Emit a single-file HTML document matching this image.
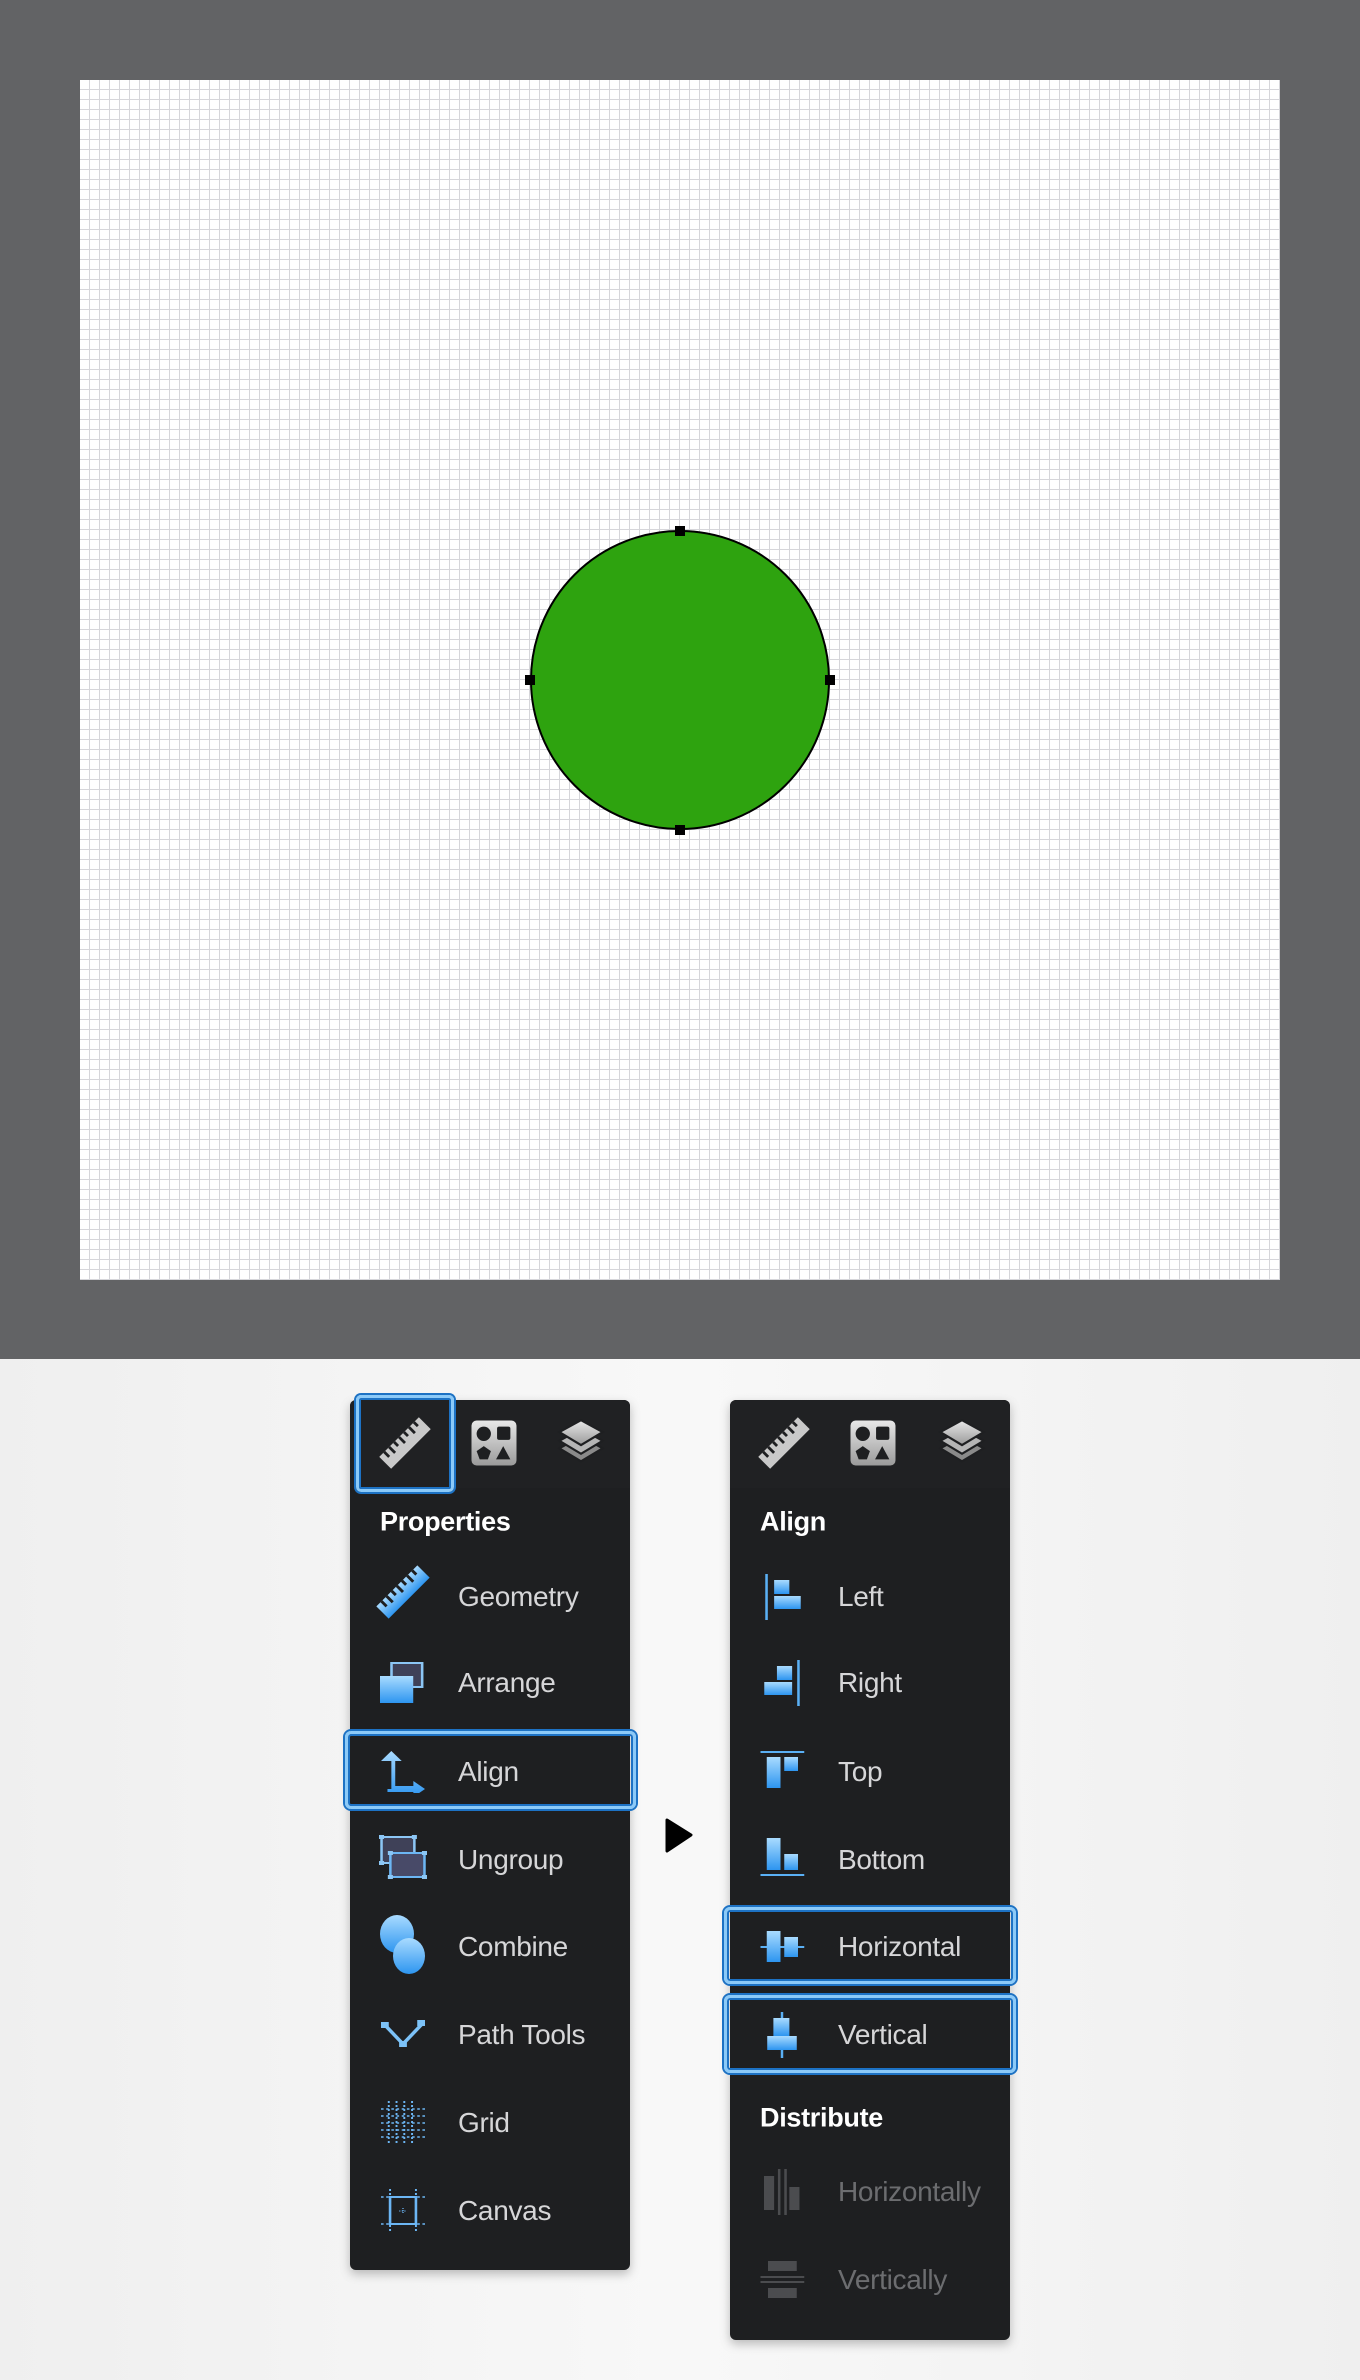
<!DOCTYPE html>
<html><head><meta charset="utf-8"><style>
*{margin:0;padding:0;box-sizing:border-box}
body{width:1360px;height:2380px;position:relative;overflow:hidden;background:linear-gradient(90deg,#efefef 0%,#f8f8f8 50%,#efefef 100%);font-family:"Liberation Sans",Arial,sans-serif}
.top{position:absolute;left:0;top:0;width:1360px;height:1359px;background:#626365}
.canvas{position:absolute;left:80px;top:80px;width:1200px;height:1200px;background-color:#fff;
background-image:linear-gradient(90deg,#d6d6da 1px,transparent 1px),linear-gradient(180deg,#d6d6da 1px,transparent 1px);
background-size:10px 10px;background-position:9px 9px}
.circle{position:absolute;left:530px;top:530px;width:300px;height:300px;border-radius:50%;background:#2ea30f;border:2px solid #000}
.h{position:absolute;width:10px;height:10px;background:#000}
.panel{position:absolute;background:#1e1f21;border-radius:6px;box-shadow:0 4px 10px rgba(0,0,0,.25)}
.panel .tabs{position:absolute;left:0;top:0;right:0;height:88px;background:#202123;border-radius:6px 6px 0 0}
.t{position:absolute;color:#d6d6d8;font-size:28px;letter-spacing:-0.3px;line-height:1;transform:translateY(-50%)}
.hd{position:absolute;color:#fff;font-size:27px;font-weight:bold;letter-spacing:-0.3px;line-height:1;transform:translateY(-50%)}
.ic{position:absolute;transform:translate(-50%,-50%)}
.sel{position:absolute;border:3px solid #8ccaf8;box-shadow:0 0 0 2px #1d72c4,inset 0 0 0 2px #1d72c4;border-radius:6px}
.dis{color:#6c6d70}
</style></head><body>
<div class="top"><div class="canvas"></div></div>
<div class="circle"></div>
<div class="h" style="left:675px;top:526px"></div>
<div class="h" style="left:675px;top:825px"></div>
<div class="h" style="left:525px;top:675px"></div>
<div class="h" style="left:825px;top:675px"></div>

<svg width="0" height="0" style="position:absolute">
<defs>
<linearGradient id="bl" x1="0" y1="0" x2="0" y2="1"><stop offset="0" stop-color="#a9dbff"/><stop offset="1" stop-color="#2d95f0"/></linearGradient>
<linearGradient id="gr" x1="0" y1="0" x2="0" y2="1"><stop offset="0" stop-color="#e8e8e8"/><stop offset="1" stop-color="#9a9a9a"/></linearGradient>
<g id="ruler"><g transform="rotate(-45 20 20)"><rect x="0" y="14" width="40" height="12"/><g stroke="#1e1f21" stroke-width="2"><path d="M5 14v5M10 14v6M15 14v4M20 14v6M25 14v4M30 14v6M35 14v4"/></g></g></g>
<g id="shapes"><rect x="0" y="0" width="44" height="44" rx="5" fill="url(#gr)"/><circle cx="12" cy="13" r="7" fill="#1e1f21"/><rect x="25" y="6" width="13" height="13" rx="2" fill="#1e1f21"/><path d="M12 25l7 5-3 8h-8l-3-8z" fill="#1e1f21"/><path d="M31 25l7 13h-14z" fill="#1e1f21"/></g>
<g id="layers"><path d="M24 16l20 11-20 12L4 27z" fill="#8a8a8a" stroke="#1e1f21" stroke-width="2"/><path d="M24 9l20 11-20 12L4 20z" fill="#b5b5b5" stroke="#1e1f21" stroke-width="2"/><path d="M24 1l20 11-20 12L4 12z" fill="url(#gr)" stroke="#1e1f21" stroke-width="2"/></g>
</defs></svg>

<!-- LEFT PANEL -->
<div class="panel" style="left:350px;top:1400px;width:280px;height:870px"><div class="tabs"></div></div>
<div class="sel" style="left:356px;top:1395px;width:98px;height:97px;border-radius:5px"></div>
<svg class="ic" style="left:405px;top:1443px" width="56" height="56" viewBox="0 0 40 40"><use href="#ruler" fill="#c9c9c9"/></svg>
<svg class="ic" style="left:494px;top:1443px" width="45" height="45" viewBox="0 0 44 44"><use href="#shapes"/></svg>
<svg class="ic" style="left:581px;top:1444px" width="52" height="50" viewBox="0 0 48 46"><use href="#layers"/></svg>

<div class="hd" style="left:380px;top:1522px">Properties</div>

<svg class="ic" style="left:403px;top:1592px" width="58" height="58" viewBox="0 0 40 40"><use href="#ruler" fill="url(#bl)"/></svg>
<div class="t" style="left:458px;top:1597px">Geometry</div>

<svg class="ic" style="left:403px;top:1683px" width="46" height="42" viewBox="0 0 36 42" preserveAspectRatio="none"><rect x="9" y="1" width="24" height="24" fill="#3f4158" stroke="#8cc6f5" stroke-width="2"/><rect x="0" y="14" width="26" height="27" fill="url(#bl)"/></svg>
<div class="t" style="left:458px;top:1683px">Arrange</div>

<div class="sel" style="left:345px;top:1731px;width:291px;height:78px"></div>
<svg class="ic" style="left:403px;top:1772px" width="44" height="42" viewBox="0 0 34 42" preserveAspectRatio="none"><path d="M8 0l8 10h-5v25h14v-5l9 8-9 8v-5H5v-3h3V10H0z" fill="url(#bl)"/></svg>
<div class="t" style="left:458px;top:1772px">Align</div>

<svg class="ic" style="left:403px;top:1857px" width="48" height="44" viewBox="0 0 38 44" preserveAspectRatio="none"><rect x="2" y="2" width="26" height="26" fill="#3f4158" stroke="#8cc6f5" stroke-width="2"/><rect x="9" y="18" width="27" height="24" fill="#484a68" stroke="#6cb6f4" stroke-width="2"/><g fill="#8cc6f5"><rect x="0" y="0" width="4" height="4"/><rect x="26" y="0" width="4" height="4"/><rect x="0" y="26" width="4" height="4"/><rect x="7" y="16" width="4" height="4"/><rect x="34" y="16" width="4" height="4"/><rect x="7" y="40" width="4" height="4"/><rect x="34" y="40" width="4" height="4"/></g></svg>
<div class="t" style="left:458px;top:1860px">Ungroup</div>

<svg class="ic" style="left:403px;top:1945px" width="46" height="60" viewBox="0 0 46 60"><ellipse cx="17" cy="19" rx="17" ry="19" fill="url(#bl)"/><ellipse cx="29" cy="41" rx="16" ry="18" fill="url(#bl)"/></svg>
<div class="t" style="left:458px;top:1947px">Combine</div>

<svg class="ic" style="left:403px;top:2034px" width="44" height="28" viewBox="0 0 34 28" preserveAspectRatio="none"><path d="M3 5l14 19 14-19" fill="none" stroke="#7cc2f8" stroke-width="3"/><rect x="0" y="2" width="6" height="6" fill="#7cc2f8"/><rect x="28" y="0" width="6" height="6" fill="#7cc2f8"/><rect x="14" y="21" width="6" height="6" fill="#7cc2f8"/></svg>
<div class="t" style="left:458px;top:2035px">Path Tools</div>

<svg class="ic" style="left:403px;top:2123px" width="44" height="44" viewBox="0 0 34 44" preserveAspectRatio="none"><g stroke="#6cb6f4" stroke-width="1.5" stroke-dasharray="2 2"><path d="M6 0v44M12 0v44M18 0v44M24 0v44M0 8h34M0 15h34M0 22h34M0 29h34M0 36h34"/></g></svg>
<div class="t" style="left:458px;top:2123px">Grid</div>

<svg class="ic" style="left:403px;top:2211px" width="44" height="44" viewBox="0 0 34 44" preserveAspectRatio="none"><g stroke="#6cb6f4" stroke-width="1.5" stroke-dasharray="2 2"><path d="M7 0v44M27 0v44M0 8h34M0 35h34"/></g><rect x="7" y="8" width="20" height="27" fill="none" stroke="#6cb6f4" stroke-width="2"/><path d="M17 19v6M14 22h6" stroke="#6cb6f4" stroke-width="1" stroke-dasharray="1 1"/></svg>
<div class="t" style="left:458px;top:2211px">Canvas</div>

<!-- arrow -->
<svg style="position:absolute;left:665px;top:1818px" width="28" height="35" viewBox="0 0 28 35"><path d="M2 2L26 17 2 33z" fill="#000" stroke="#000" stroke-width="3" stroke-linejoin="round"/></svg>

<!-- RIGHT PANEL -->
<div class="panel" style="left:730px;top:1400px;width:280px;height:940px"><div class="tabs"></div></div>
<svg class="ic" style="left:784px;top:1443px" width="56" height="56" viewBox="0 0 40 40"><use href="#ruler" fill="#c9c9c9"/></svg>
<svg class="ic" style="left:873px;top:1443px" width="45" height="45" viewBox="0 0 44 44"><use href="#shapes"/></svg>
<svg class="ic" style="left:962px;top:1444px" width="52" height="50" viewBox="0 0 48 46"><use href="#layers"/></svg>

<div class="hd" style="left:760px;top:1522px">Align</div>

<svg class="ic" style="left:783px;top:1597px" width="38" height="46" viewBox="0 0 30 46" preserveAspectRatio="none"><rect x="1" y="0" width="2" height="46" fill="#5ab0f5"/><rect x="8" y="6" width="12" height="14" fill="url(#bl)"/><rect x="8" y="22" width="21" height="13" fill="url(#bl)"/></svg>
<div class="t" style="left:838px;top:1597px">Left</div>

<svg class="ic" style="left:782px;top:1683px" width="38" height="46" viewBox="0 0 30 46" preserveAspectRatio="none"><rect x="27" y="0" width="2" height="46" fill="#5ab0f5"/><rect x="11" y="6" width="12" height="14" fill="url(#bl)"/><rect x="1" y="22" width="22" height="13" fill="url(#bl)"/></svg>
<div class="t" style="left:838px;top:1683px">Right</div>

<svg class="ic" style="left:783px;top:1770px" width="45" height="38" viewBox="0 0 36 38" preserveAspectRatio="none"><rect x="0" y="0" width="35" height="2" fill="#5ab0f5"/><rect x="5" y="6" width="11" height="31" fill="url(#bl)"/><rect x="19" y="6" width="11" height="14" fill="url(#bl)"/></svg>
<div class="t" style="left:838px;top:1772px">Top</div>

<svg class="ic" style="left:783px;top:1857px" width="45" height="38" viewBox="0 0 36 38" preserveAspectRatio="none"><rect x="0" y="36" width="35" height="2" fill="#5ab0f5"/><rect x="5" y="0" width="11" height="32" fill="url(#bl)"/><rect x="19" y="16" width="11" height="16" fill="url(#bl)"/></svg>
<div class="t" style="left:838px;top:1860px">Bottom</div>

<div class="sel" style="left:724px;top:1907px;width:292px;height:77px"></div>
<svg class="ic" style="left:783px;top:1947px" width="45" height="32" viewBox="0 0 36 32" preserveAspectRatio="none"><rect x="0" y="15" width="35" height="2" fill="#5ab0f5"/><rect x="5" y="0" width="11" height="31" fill="url(#bl)"/><rect x="19" y="6" width="11" height="20" fill="url(#bl)"/></svg>
<div class="t" style="left:838px;top:1947px">Horizontal</div>

<div class="sel" style="left:724px;top:1995px;width:292px;height:78px"></div>
<svg class="ic" style="left:782px;top:2035px" width="32" height="46" viewBox="0 0 26 46" preserveAspectRatio="none"><rect x="12" y="0" width="2" height="46" fill="#5ab0f5"/><rect x="6" y="6" width="13" height="18" fill="url(#bl)"/><rect x="1" y="24" width="24" height="14" fill="url(#bl)"/></svg>
<div class="t" style="left:838px;top:2035px">Vertical</div>

<div class="hd" style="left:760px;top:2118px">Distribute</div>

<svg class="ic" style="left:783px;top:2192px" width="38" height="46" viewBox="0 0 30 46" preserveAspectRatio="none"><rect x="0" y="7" width="8" height="34" fill="#4b4c4f"/><rect x="11" y="0" width="2" height="46" fill="#4b4c4f"/><rect x="16" y="0" width="2" height="46" fill="#4b4c4f"/><rect x="20" y="18" width="8" height="23" fill="#4b4c4f"/></svg>
<div class="t dis" style="left:838px;top:2192px">Horizontally</div>

<svg class="ic" style="left:783px;top:2280px" width="45" height="38" viewBox="0 0 36 38" preserveAspectRatio="none"><rect x="6" y="0" width="23" height="10" fill="#4b4c4f"/><rect x="0" y="15" width="35" height="2" fill="#4b4c4f"/><rect x="0" y="20" width="35" height="2" fill="#4b4c4f"/><rect x="6" y="27" width="23" height="10" fill="#4b4c4f"/></svg>
<div class="t dis" style="left:838px;top:2280px">Vertically</div>
</body></html>
